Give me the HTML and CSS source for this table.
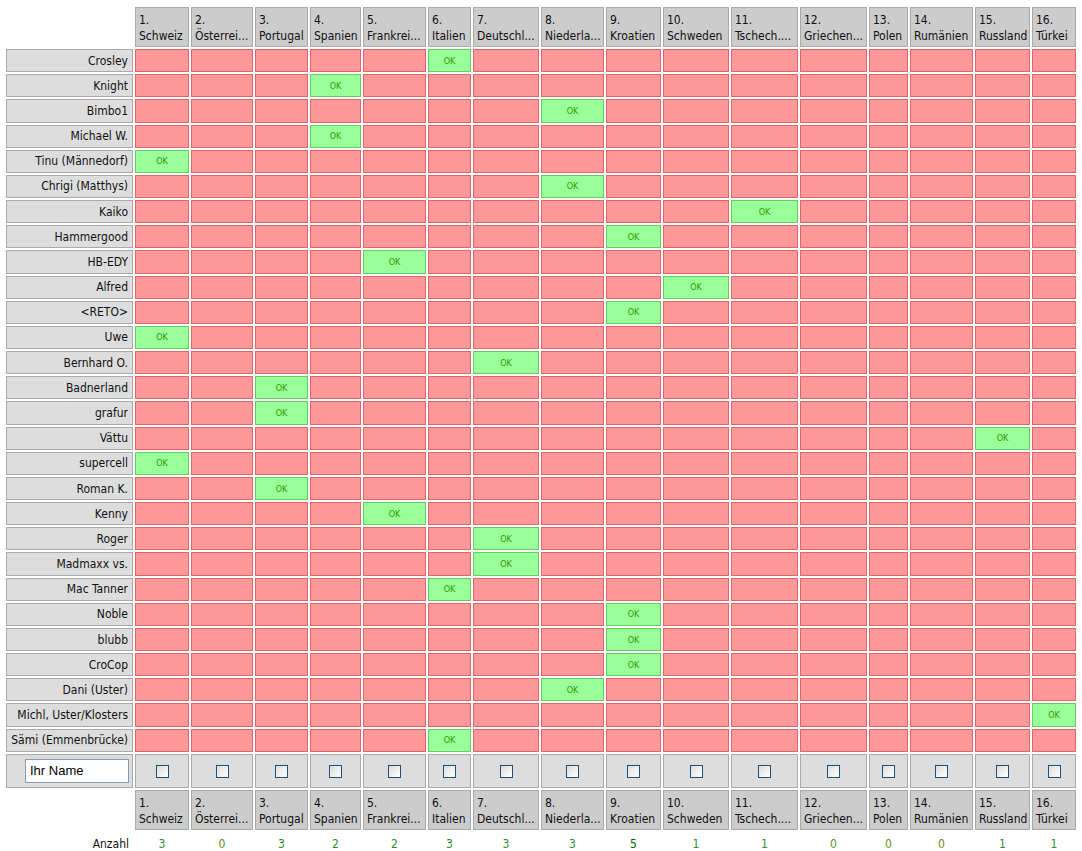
FILE: index.html
```html
<!DOCTYPE html>
<html lang="de">
<head>
<meta charset="utf-8">
<title>Umfrage</title>
<link rel="stylesheet" href="styles.css">
</head>
<body>
<table class="poll">
<tr class="head">
<td class="blank w0"></td>
<th class="col w1">1.<br>Schweiz</th>
<th class="col w2">2.<br>Österrei...</th>
<th class="col w3">3.<br>Portugal</th>
<th class="col w4">4.<br>Spanien</th>
<th class="col w5">5.<br>Frankrei...</th>
<th class="col w6">6.<br>Italien</th>
<th class="col w7">7.<br>Deutschl...</th>
<th class="col w8">8.<br>Niederla...</th>
<th class="col w9">9.<br>Kroatien</th>
<th class="col w10">10.<br>Schweden</th>
<th class="col w11">11.<br>Tschech....</th>
<th class="col w12">12.<br>Griechen...</th>
<th class="col w13">13.<br>Polen</th>
<th class="col w14">14.<br>Rumänien</th>
<th class="col w15">15.<br>Russland</th>
<th class="col w16">16.<br>Türkei</th>
</tr>
<tr class="vote"><th class="name">Crosley</th><td class="n"></td><td class="n"></td><td class="n"></td><td class="n"></td><td class="n"></td><td class="y">OK</td><td class="n"></td><td class="n"></td><td class="n"></td><td class="n"></td><td class="n"></td><td class="n"></td><td class="n"></td><td class="n"></td><td class="n"></td><td class="n"></td></tr>
<tr class="vote"><th class="name">Knight</th><td class="n"></td><td class="n"></td><td class="n"></td><td class="y">OK</td><td class="n"></td><td class="n"></td><td class="n"></td><td class="n"></td><td class="n"></td><td class="n"></td><td class="n"></td><td class="n"></td><td class="n"></td><td class="n"></td><td class="n"></td><td class="n"></td></tr>
<tr class="vote"><th class="name">Bimbo1</th><td class="n"></td><td class="n"></td><td class="n"></td><td class="n"></td><td class="n"></td><td class="n"></td><td class="n"></td><td class="y">OK</td><td class="n"></td><td class="n"></td><td class="n"></td><td class="n"></td><td class="n"></td><td class="n"></td><td class="n"></td><td class="n"></td></tr>
<tr class="vote"><th class="name">Michael W.</th><td class="n"></td><td class="n"></td><td class="n"></td><td class="y">OK</td><td class="n"></td><td class="n"></td><td class="n"></td><td class="n"></td><td class="n"></td><td class="n"></td><td class="n"></td><td class="n"></td><td class="n"></td><td class="n"></td><td class="n"></td><td class="n"></td></tr>
<tr class="vote"><th class="name">Tinu (Männedorf)</th><td class="y">OK</td><td class="n"></td><td class="n"></td><td class="n"></td><td class="n"></td><td class="n"></td><td class="n"></td><td class="n"></td><td class="n"></td><td class="n"></td><td class="n"></td><td class="n"></td><td class="n"></td><td class="n"></td><td class="n"></td><td class="n"></td></tr>
<tr class="vote"><th class="name">Chrigi (Matthys)</th><td class="n"></td><td class="n"></td><td class="n"></td><td class="n"></td><td class="n"></td><td class="n"></td><td class="n"></td><td class="y">OK</td><td class="n"></td><td class="n"></td><td class="n"></td><td class="n"></td><td class="n"></td><td class="n"></td><td class="n"></td><td class="n"></td></tr>
<tr class="vote"><th class="name">Kaiko</th><td class="n"></td><td class="n"></td><td class="n"></td><td class="n"></td><td class="n"></td><td class="n"></td><td class="n"></td><td class="n"></td><td class="n"></td><td class="n"></td><td class="y">OK</td><td class="n"></td><td class="n"></td><td class="n"></td><td class="n"></td><td class="n"></td></tr>
<tr class="vote"><th class="name">Hammergood</th><td class="n"></td><td class="n"></td><td class="n"></td><td class="n"></td><td class="n"></td><td class="n"></td><td class="n"></td><td class="n"></td><td class="y">OK</td><td class="n"></td><td class="n"></td><td class="n"></td><td class="n"></td><td class="n"></td><td class="n"></td><td class="n"></td></tr>
<tr class="vote"><th class="name">HB-EDY</th><td class="n"></td><td class="n"></td><td class="n"></td><td class="n"></td><td class="y">OK</td><td class="n"></td><td class="n"></td><td class="n"></td><td class="n"></td><td class="n"></td><td class="n"></td><td class="n"></td><td class="n"></td><td class="n"></td><td class="n"></td><td class="n"></td></tr>
<tr class="vote"><th class="name">Alfred</th><td class="n"></td><td class="n"></td><td class="n"></td><td class="n"></td><td class="n"></td><td class="n"></td><td class="n"></td><td class="n"></td><td class="n"></td><td class="y">OK</td><td class="n"></td><td class="n"></td><td class="n"></td><td class="n"></td><td class="n"></td><td class="n"></td></tr>
<tr class="vote"><th class="name">&lt;RETO&gt;</th><td class="n"></td><td class="n"></td><td class="n"></td><td class="n"></td><td class="n"></td><td class="n"></td><td class="n"></td><td class="n"></td><td class="y">OK</td><td class="n"></td><td class="n"></td><td class="n"></td><td class="n"></td><td class="n"></td><td class="n"></td><td class="n"></td></tr>
<tr class="vote"><th class="name">Uwe</th><td class="y">OK</td><td class="n"></td><td class="n"></td><td class="n"></td><td class="n"></td><td class="n"></td><td class="n"></td><td class="n"></td><td class="n"></td><td class="n"></td><td class="n"></td><td class="n"></td><td class="n"></td><td class="n"></td><td class="n"></td><td class="n"></td></tr>
<tr class="vote"><th class="name">Bernhard O.</th><td class="n"></td><td class="n"></td><td class="n"></td><td class="n"></td><td class="n"></td><td class="n"></td><td class="y">OK</td><td class="n"></td><td class="n"></td><td class="n"></td><td class="n"></td><td class="n"></td><td class="n"></td><td class="n"></td><td class="n"></td><td class="n"></td></tr>
<tr class="vote"><th class="name">Badnerland</th><td class="n"></td><td class="n"></td><td class="y">OK</td><td class="n"></td><td class="n"></td><td class="n"></td><td class="n"></td><td class="n"></td><td class="n"></td><td class="n"></td><td class="n"></td><td class="n"></td><td class="n"></td><td class="n"></td><td class="n"></td><td class="n"></td></tr>
<tr class="vote"><th class="name">grafur</th><td class="n"></td><td class="n"></td><td class="y">OK</td><td class="n"></td><td class="n"></td><td class="n"></td><td class="n"></td><td class="n"></td><td class="n"></td><td class="n"></td><td class="n"></td><td class="n"></td><td class="n"></td><td class="n"></td><td class="n"></td><td class="n"></td></tr>
<tr class="vote"><th class="name">Vättu</th><td class="n"></td><td class="n"></td><td class="n"></td><td class="n"></td><td class="n"></td><td class="n"></td><td class="n"></td><td class="n"></td><td class="n"></td><td class="n"></td><td class="n"></td><td class="n"></td><td class="n"></td><td class="n"></td><td class="y">OK</td><td class="n"></td></tr>
<tr class="vote"><th class="name">supercell</th><td class="y">OK</td><td class="n"></td><td class="n"></td><td class="n"></td><td class="n"></td><td class="n"></td><td class="n"></td><td class="n"></td><td class="n"></td><td class="n"></td><td class="n"></td><td class="n"></td><td class="n"></td><td class="n"></td><td class="n"></td><td class="n"></td></tr>
<tr class="vote"><th class="name">Roman K.</th><td class="n"></td><td class="n"></td><td class="y">OK</td><td class="n"></td><td class="n"></td><td class="n"></td><td class="n"></td><td class="n"></td><td class="n"></td><td class="n"></td><td class="n"></td><td class="n"></td><td class="n"></td><td class="n"></td><td class="n"></td><td class="n"></td></tr>
<tr class="vote"><th class="name">Kenny</th><td class="n"></td><td class="n"></td><td class="n"></td><td class="n"></td><td class="y">OK</td><td class="n"></td><td class="n"></td><td class="n"></td><td class="n"></td><td class="n"></td><td class="n"></td><td class="n"></td><td class="n"></td><td class="n"></td><td class="n"></td><td class="n"></td></tr>
<tr class="vote"><th class="name">Roger</th><td class="n"></td><td class="n"></td><td class="n"></td><td class="n"></td><td class="n"></td><td class="n"></td><td class="y">OK</td><td class="n"></td><td class="n"></td><td class="n"></td><td class="n"></td><td class="n"></td><td class="n"></td><td class="n"></td><td class="n"></td><td class="n"></td></tr>
<tr class="vote"><th class="name">Madmaxx vs.</th><td class="n"></td><td class="n"></td><td class="n"></td><td class="n"></td><td class="n"></td><td class="n"></td><td class="y">OK</td><td class="n"></td><td class="n"></td><td class="n"></td><td class="n"></td><td class="n"></td><td class="n"></td><td class="n"></td><td class="n"></td><td class="n"></td></tr>
<tr class="vote"><th class="name">Mac Tanner</th><td class="n"></td><td class="n"></td><td class="n"></td><td class="n"></td><td class="n"></td><td class="y">OK</td><td class="n"></td><td class="n"></td><td class="n"></td><td class="n"></td><td class="n"></td><td class="n"></td><td class="n"></td><td class="n"></td><td class="n"></td><td class="n"></td></tr>
<tr class="vote"><th class="name">Noble</th><td class="n"></td><td class="n"></td><td class="n"></td><td class="n"></td><td class="n"></td><td class="n"></td><td class="n"></td><td class="n"></td><td class="y">OK</td><td class="n"></td><td class="n"></td><td class="n"></td><td class="n"></td><td class="n"></td><td class="n"></td><td class="n"></td></tr>
<tr class="vote"><th class="name">blubb</th><td class="n"></td><td class="n"></td><td class="n"></td><td class="n"></td><td class="n"></td><td class="n"></td><td class="n"></td><td class="n"></td><td class="y">OK</td><td class="n"></td><td class="n"></td><td class="n"></td><td class="n"></td><td class="n"></td><td class="n"></td><td class="n"></td></tr>
<tr class="vote"><th class="name">CroCop</th><td class="n"></td><td class="n"></td><td class="n"></td><td class="n"></td><td class="n"></td><td class="n"></td><td class="n"></td><td class="n"></td><td class="y">OK</td><td class="n"></td><td class="n"></td><td class="n"></td><td class="n"></td><td class="n"></td><td class="n"></td><td class="n"></td></tr>
<tr class="vote"><th class="name">Dani (Uster)</th><td class="n"></td><td class="n"></td><td class="n"></td><td class="n"></td><td class="n"></td><td class="n"></td><td class="n"></td><td class="y">OK</td><td class="n"></td><td class="n"></td><td class="n"></td><td class="n"></td><td class="n"></td><td class="n"></td><td class="n"></td><td class="n"></td></tr>
<tr class="vote"><th class="name">Michl, Uster/Klosters</th><td class="n"></td><td class="n"></td><td class="n"></td><td class="n"></td><td class="n"></td><td class="n"></td><td class="n"></td><td class="n"></td><td class="n"></td><td class="n"></td><td class="n"></td><td class="n"></td><td class="n"></td><td class="n"></td><td class="n"></td><td class="y">OK</td></tr>
<tr class="vote"><th class="name">Sämi (Emmenbrücke)</th><td class="n"></td><td class="n"></td><td class="n"></td><td class="n"></td><td class="n"></td><td class="y">OK</td><td class="n"></td><td class="n"></td><td class="n"></td><td class="n"></td><td class="n"></td><td class="n"></td><td class="n"></td><td class="n"></td><td class="n"></td><td class="n"></td></tr>
<tr class="entry">
<th class="name-in"><input class="who" type="text" value="Ihr Name"></th>
<td class="pick"><input class="cb" type="checkbox"></td>
<td class="pick"><input class="cb" type="checkbox"></td>
<td class="pick"><input class="cb" type="checkbox"></td>
<td class="pick"><input class="cb" type="checkbox"></td>
<td class="pick"><input class="cb" type="checkbox"></td>
<td class="pick"><input class="cb" type="checkbox"></td>
<td class="pick"><input class="cb" type="checkbox"></td>
<td class="pick"><input class="cb" type="checkbox"></td>
<td class="pick"><input class="cb" type="checkbox"></td>
<td class="pick"><input class="cb" type="checkbox"></td>
<td class="pick"><input class="cb" type="checkbox"></td>
<td class="pick"><input class="cb" type="checkbox"></td>
<td class="pick"><input class="cb" type="checkbox"></td>
<td class="pick"><input class="cb" type="checkbox"></td>
<td class="pick"><input class="cb" type="checkbox"></td>
<td class="pick"><input class="cb" type="checkbox"></td>
</tr>
<tr class="foot">
<td class="blank"></td>
<th class="col">1.<br>Schweiz</th>
<th class="col">2.<br>Österrei...</th>
<th class="col">3.<br>Portugal</th>
<th class="col">4.<br>Spanien</th>
<th class="col">5.<br>Frankrei...</th>
<th class="col">6.<br>Italien</th>
<th class="col">7.<br>Deutschl...</th>
<th class="col">8.<br>Niederla...</th>
<th class="col">9.<br>Kroatien</th>
<th class="col">10.<br>Schweden</th>
<th class="col">11.<br>Tschech....</th>
<th class="col">12.<br>Griechen...</th>
<th class="col">13.<br>Polen</th>
<th class="col">14.<br>Rumänien</th>
<th class="col">15.<br>Russland</th>
<th class="col">16.<br>Türkei</th>
</tr>
<tr class="count">
<th class="label">Anzahl</th>
<td>3</td><td class="zero">0</td><td>3</td><td>2</td><td>2</td><td>3</td><td>3</td><td>3</td><td class="max">5</td><td>1</td><td>1</td><td class="zero">0</td><td class="zero">0</td><td class="zero">0</td><td>1</td><td>1</td>
</tr>
</table>
</body>
</html>
```
FILE: styles.css
```css
html, body {
  margin: 0;
  padding: 0;
  background: #ffffff;
  overflow: hidden;
}
body {
  font-family: "DejaVu Sans Condensed", "DejaVu Sans", sans-serif;
  font-size: 12px;
  color: #000000;
}
.poll {
  border-collapse: separate;
  border-spacing: 2px;
  table-layout: fixed;
  width: 1074px;
  margin: 5px 0 0 4px;
}
.poll td, .poll th {
  box-sizing: border-box;
  padding: 0;
  font-weight: normal;
}
.w0 { width: 127px; }
.w1 { width: 54px; }
.w2 { width: 62px; }
.w3 { width: 53px; }
.w4 { width: 51px; }
.w5 { width: 63px; }
.w6 { width: 43px; }
.w7 { width: 66px; }
.w8 { width: 63px; }
.w9 { width: 55px; }
.w10 { width: 66px; }
.w11 { width: 67px; }
.w12 { width: 67px; }
.w13 { width: 39px; }
.w14 { width: 63px; }
.w15 { width: 55px; }
.w16 { width: 44px; }

.poll th.col {
  background: #cccccc;
  border: 1px solid #a9a9a9;
  text-align: left;
  vertical-align: top;
  padding: 4px 3px 2px 3px;
  line-height: 16px;
  white-space: nowrap;
  overflow: hidden;
  color: #111111;
}
.poll tr.head th.col { height: 40px; }
.poll tr.foot th.col { height: 39px; }

.poll th.name {
  background: #dddddd;
  border: 1px solid #aaaaaa;
  text-align: right;
  padding: 0 4px 0 0;
  white-space: nowrap;
  overflow: hidden;
  color: #111111;
}
.poll tr.vote th, .poll tr.vote td { height: 23.18px; }
.poll td.n {
  background: #ff9999;
  border: 1px solid #dd6666;
}
.poll td.y {
  background: #99ff99;
  border: 1px solid #66cc66;
  text-align: center;
  font-size: 9px;
  color: #339900;
}

.poll tr.entry th, .poll tr.entry td {
  height: 34px;
  background: #dddddd;
  border: 1px solid #aaaaaa;
}
.poll th.name-in {
  text-align: right;
  padding: 0 3px 0 0;
}
.who {
  box-sizing: border-box;
  width: 104px;
  height: 24px;
  margin: 0;
  border: 1px solid #7f9db9;
  padding: 0 4px;
  font-family: "Liberation Sans", Arial, sans-serif;
  font-size: 13px;
  color: #000000;
  background: #ffffff;
  vertical-align: middle;
}
.poll td.pick { text-align: center; }
.cb {
  -webkit-appearance: none;
  appearance: none;
  box-sizing: border-box;
  width: 13px;
  height: 13px;
  margin: 0;
  border: 1px solid #1c5180;
  background: linear-gradient(135deg, #dcdcd7 0%, #ffffff 100%);
  vertical-align: middle;
}

.poll tr.count td, .poll tr.count th {
  height: 22px;
  padding-top: 2px;
  font-size: 12px;
}
.poll tr.count th.label {
  text-align: right;
  padding-right: 4px;
  color: #111111;
}
.poll tr.count td {
  text-align: center;
  color: #2f8f2f;
}
.poll tr.count td.zero { color: #5f8f1f; }
.poll tr.count td.max { color: #006600; }
```
